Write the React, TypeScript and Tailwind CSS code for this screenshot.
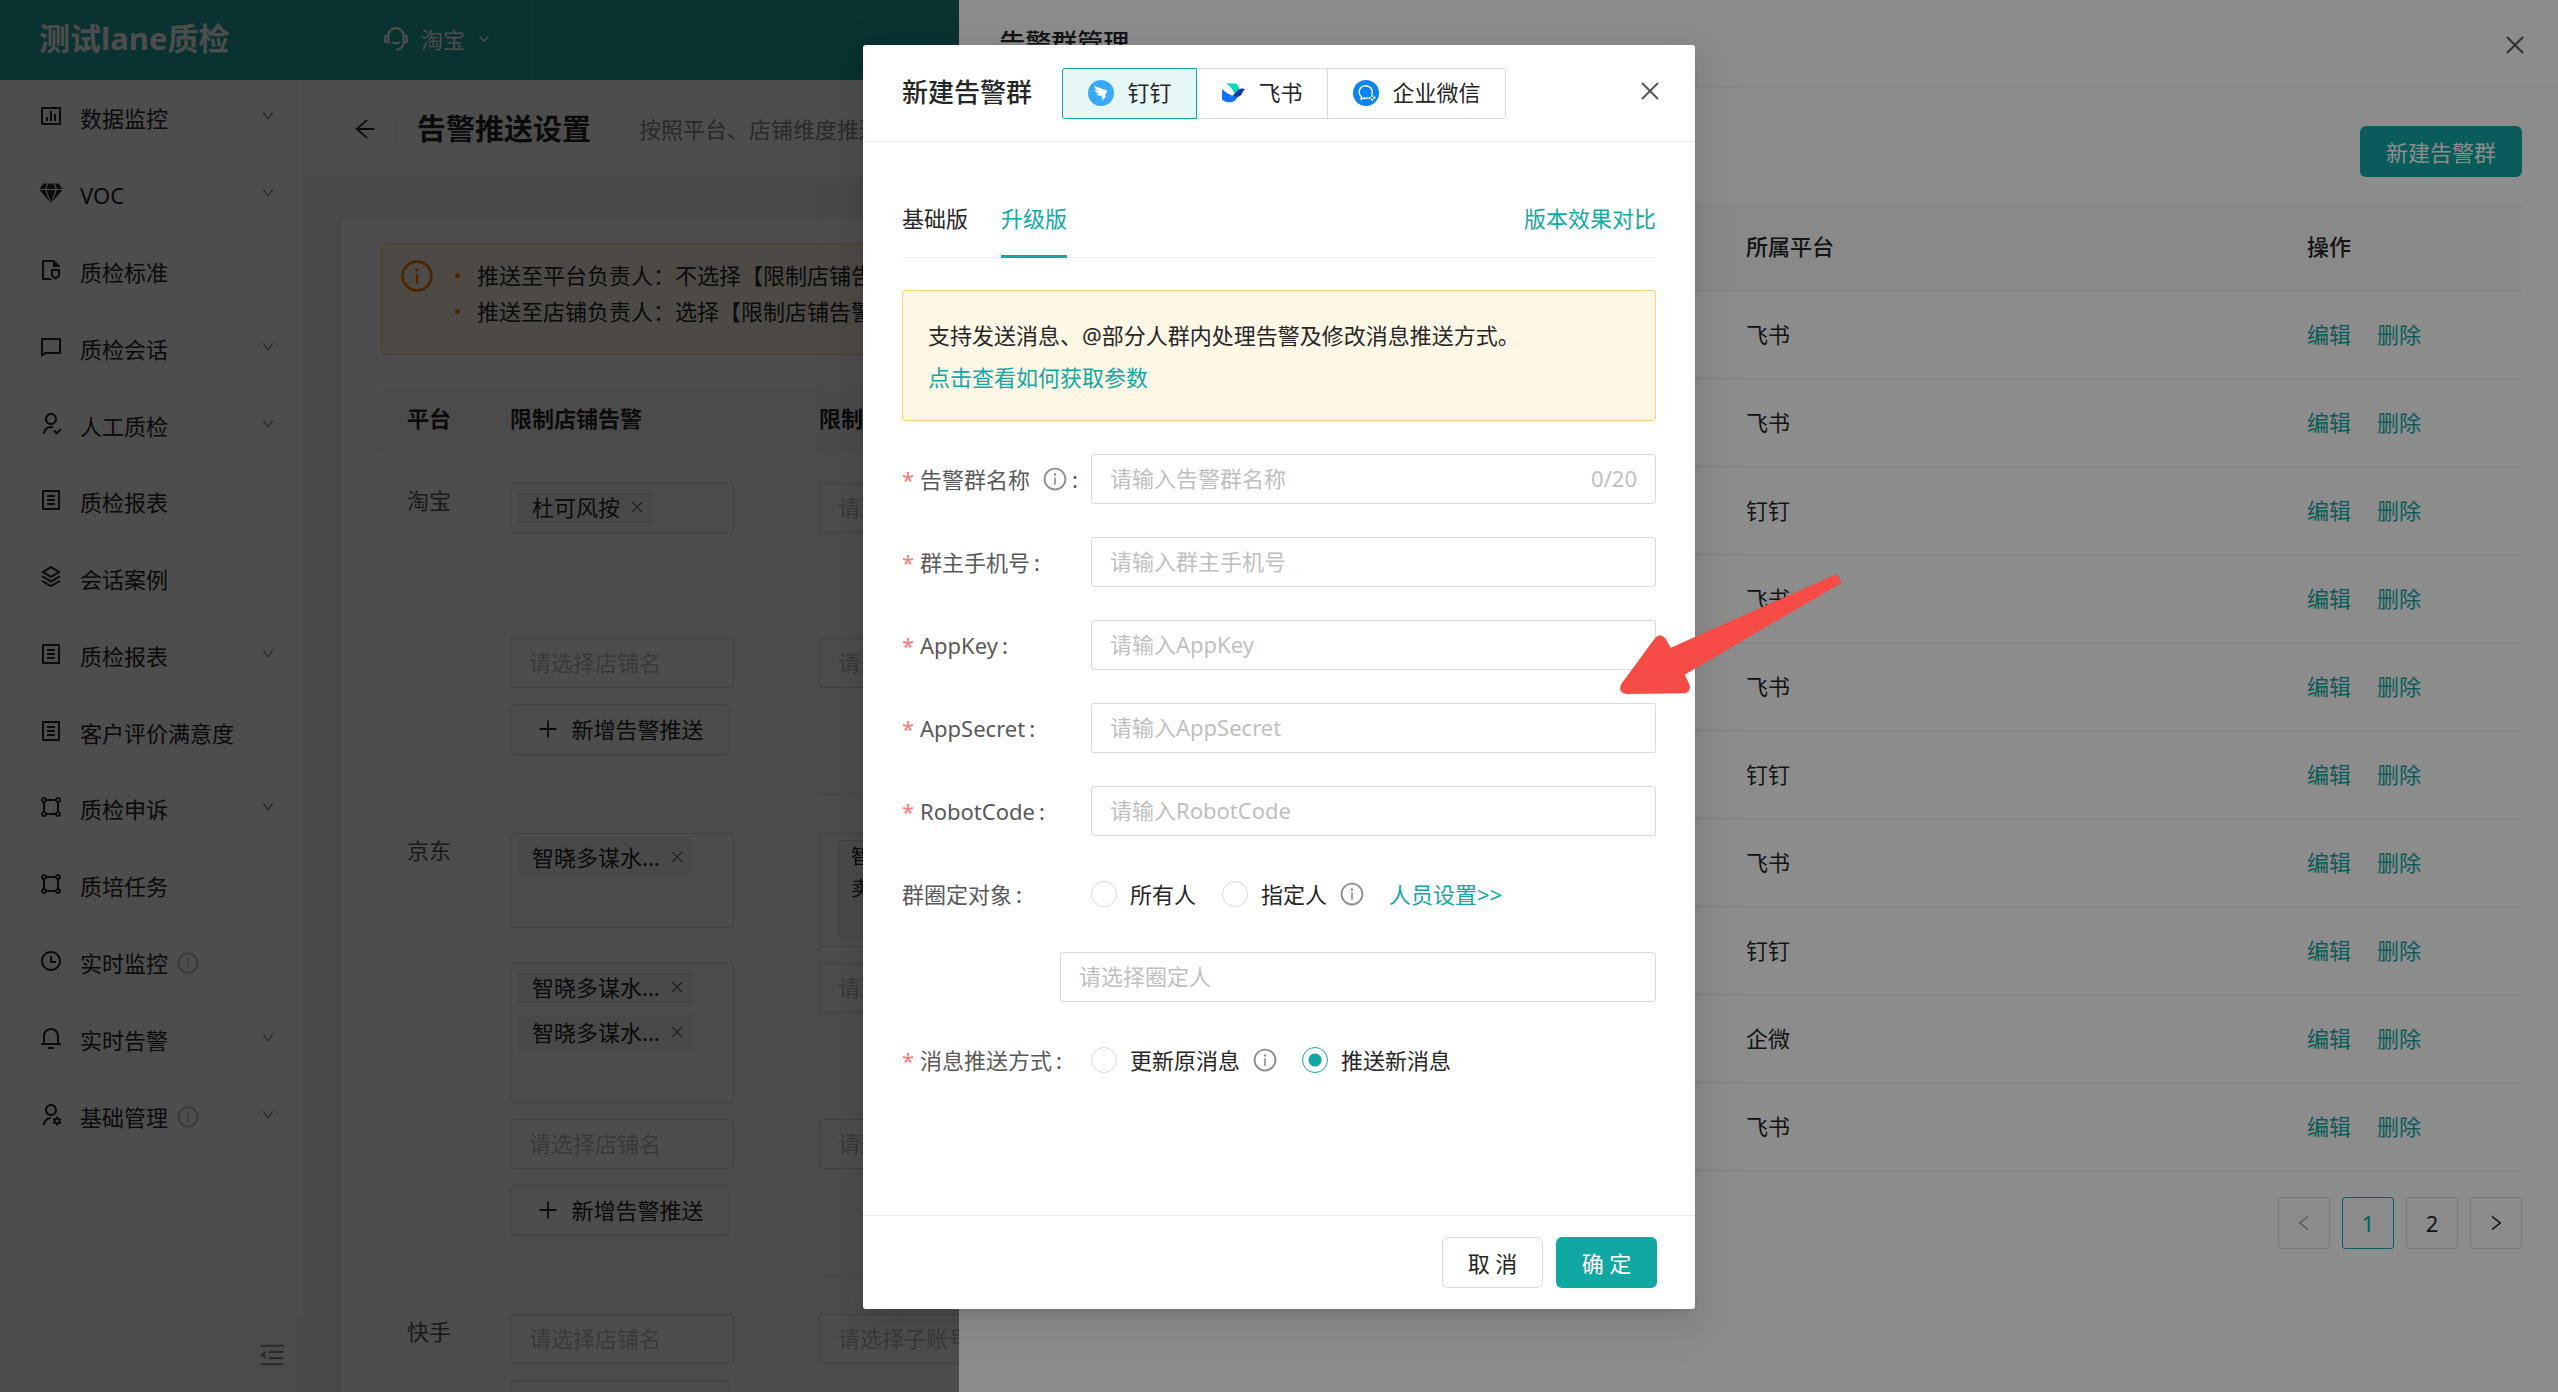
import { useState } from "react";
import type { ReactNode } from "react";
import type { IconType } from "react-icons";
import {
  AiOutlineArrowLeft,
  AiOutlineClose,
  AiOutlineDown,
  AiOutlineInfoCircle,
  AiOutlineLeft,
  AiOutlineMenuFold,
  AiOutlinePlus,
  AiOutlineRight,
} from "react-icons/ai";
import {
  RiArrowDownSLine,
  RiBarChartBoxLine,
  RiCustomerService2Line,
  RiFileListLine,
  RiFileShield2Line,
  RiNotification3Line,
  RiShapeLine,
  RiStackLine,
  RiTimeLine,
  RiUserFollowLine,
  RiUserSettingsLine,
} from "react-icons/ri";

type MenuItem = {
  label: string;
  icon: IconType | typeof GemIcon;
  arrow?: boolean;
  info?: boolean;
};

type IconProps = { size?: number | string; className?: string };

function GemIcon({ size = 24, className }: IconProps) {
  return (
    <svg width={size} height={size} viewBox="0 0 24 24" fill="currentColor" className={className}>
      <path d="M4.5 2.5h3.7L6 8H0.3z" />
      <path d="M9.4 2.5h5.2L16.6 8H7.4z" />
      <path d="M15.8 2.5h3.7L23.7 8H18z" />
      <path d="M0.6 9h5.6l4.6 12z" />
      <path d="M7.5 9h9L12 22z" />
      <path d="M17.8 9h5.6L13.2 21z" />
    </svg>
  );
}

function ChatIcon({ size = 24, className }: IconProps) {
  return (
    <svg
      width={size}
      height={size}
      viewBox="0 0 24 24"
      fill="none"
      stroke="currentColor"
      strokeWidth="2"
      strokeLinejoin="round"
      className={className}
    >
      <path d="M3 4h18v14H6.100L3 20.400z" />
    </svg>
  );
}

function DingIcon() {
  return (
    <svg width="26" height="26" viewBox="0 0 26 26">
      <circle cx="13" cy="13" r="13" fill="#3aa8ff" />
      <path
        fill="#fff"
        d="M6.2 5.4C9 7.5 15 8.6 18.6 10.3c.6.4.5 1 .2 1.6l-2.2 4.4h1.9l-4.6 4.4.9-3.4h-1.7l.7-1.6c-2.5.4-4.6-.5-5.2-1.8h3c-3-.6-4.6-2-5-3.8l3.8.8C7.8 9.8 6.3 8 6.2 5.4z"
      />
    </svg>
  );
}

function FeishuIcon() {
  return (
    <svg width="23" height="20" viewBox="0 0 23 20">
      <path fill="#00dab8" d="M4.3.5h10c1.5 1.5 2.8 3.8 3 5.8l-4.5 4.2C11 7 8.5 3.5 4.3.5z" />
      <path fill="#1470ff" d="M0 6c3.5 3.5 8 6.3 13 7.5l3 .3c-2 3.7-5 5.5-8.5 5.5-3.2 0-6-1.2-7.5-2.8z" />
      <path fill="#0b3ca8" d="M23 6.3c-1.8 1.2-2.2 3.2-3.5 5.2-2 3-5.5 3-9 1.2 3-2.5 4.5-6 8-7 1.5-.4 3.3-.2 4.5.6z" />
    </svg>
  );
}

function WecomIcon() {
  return (
    <svg width="26" height="26" viewBox="0 0 26 26">
      <circle cx="13" cy="13" r="13" fill="#0a84f0" />
      <path
        fill="none"
        stroke="#fff"
        strokeWidth="1.4"
        strokeLinejoin="round"
        d="M18.8 14.5a6.6 6.3 0 1 0-10.3 2.4l-.6 2.4 2.900-1.300a7 7 0 0 0 4.500-.1"
      />
      <path
        stroke="#fff"
        strokeWidth="1.6"
        strokeLinecap="round"
        d="M18.7 15.3l.8 1M21.8 17.4l-1 .9M19.4 20.3l-.8-1M16.3 18.2l1-.8"
      />
    </svg>
  );
}

const menu: MenuItem[] = [
  { label: "数据监控", icon: RiBarChartBoxLine, arrow: true },
  { label: "VOC", icon: GemIcon, arrow: true },
  { label: "质检标准", icon: RiFileShield2Line },
  { label: "质检会话", icon: ChatIcon, arrow: true },
  { label: "人工质检", icon: RiUserFollowLine, arrow: true },
  { label: "质检报表", icon: RiFileListLine },
  { label: "会话案例", icon: RiStackLine },
  { label: "质检报表", icon: RiFileListLine, arrow: true },
  { label: "客户评价满意度", icon: RiFileListLine },
  { label: "质检申诉", icon: RiShapeLine, arrow: true },
  { label: "质培任务", icon: RiShapeLine },
  { label: "实时监控", icon: RiTimeLine, info: true },
  { label: "实时告警", icon: RiNotification3Line, arrow: true },
  { label: "基础管理", icon: RiUserSettingsLine, arrow: true, info: true },
];

type Slot = {
  slot: string;
  shopBox: string;
  shops: string[];
  accounts?: string[];
};

const rules: { platform: string; pad: string; slots: Slot[] }[] = [
  {
    platform: "淘宝",
    pad: "pt-8",
    slots: [
      { slot: "h-[139px]", shopBox: "h-[50px]", shops: ["杜可风按"] },
      { slot: "h-[50px]", shopBox: "h-[50px]", shops: [] },
    ],
  },
  {
    platform: "京东",
    pad: "pt-[38px]",
    slots: [
      { slot: "h-[114px]", shopBox: "h-[95px]", shops: ["智晓多谋水..."], accounts: ["智晓多谋", "卖家账号"] },
      { slot: "h-[140px]", shopBox: "h-[140px]", shops: ["智晓多谋水...", "智晓多谋水..."] },
      { slot: "h-[50px]", shopBox: "h-[50px]", shops: [] },
    ],
  },
  {
    platform: "快手",
    pad: "pt-[38px]",
    slots: [{ slot: "h-[50px]", shopBox: "h-[50px]", shops: [] }],
  },
];

const groups = ["飞书", "飞书", "钉钉", "飞书", "飞书", "钉钉", "飞书", "钉钉", "企微", "飞书"];

function PlaceholderSelect({ text, label }: { text: string; label: string }) {
  return (
    <select
      aria-label={label}
      className="block h-[50px] w-full appearance-none rounded-[3px] border border-[#d9d9d9] bg-white px-[18px] pb-0.5 text-[#bfbfbf]"
    >
      <option>{text}</option>
    </select>
  );
}

function Sidebar() {
  return (
    <aside className="flex w-[304px] shrink-0 flex-col border-r border-[#ececec] bg-white">
      <nav className="flex h-[1075px] flex-col">
        {menu.map((item, i) => (
          <a key={i} href="#" className="flex flex-1 items-center pr-[28px] pl-[39px] text-[#262626]">
            <item.icon size={24} className="mb-1" />
            <span className="ml-[17px]">{item.label}</span>
            {item.info && <AiOutlineInfoCircle size={24} className="ml-2 text-[#bfbfbf]" />}
            {item.arrow && <AiOutlineDown size={14} className="mb-1 ml-auto text-[#737373]" />}
          </a>
        ))}
      </nav>
      <div className="mt-auto flex h-[75px] items-center justify-end border-t border-[#ececec] bg-[#fafafa] pr-4">
        <button aria-label="收起菜单" className="text-[#8c8c8c]">
          <AiOutlineMenuFold size={30} />
        </button>
      </div>
    </aside>
  );
}

function RulesTable() {
  return (
    <table className="mt-8 w-full table-fixed border-collapse text-left">
      <thead>
        <tr className="h-[63px] border-b border-[#ececec] bg-[#fafafa] text-[#262626]">
          <th className="w-[103px] pl-[26px] font-bold">平台</th>
          <th className="w-[309px] pl-[26px] font-bold">限制店铺告警</th>
          <th className="pl-[26px] font-bold">限制子账号告警</th>
        </tr>
      </thead>
      <tbody>
        {rules.map((rule) => (
          <tr key={rule.platform} className="border-b border-[#ececec] align-top">
            <td className={`pl-[26px] leading-[34px] text-[#595959] ${rule.pad}`}>{rule.platform}</td>
            <td className={`pr-[59px] pb-[39px] pl-[26px] ${rule.pad}`}>
              <div className="flex flex-col items-start gap-4">
                {rule.slots.map((s, i) => (
                  <div key={i} className={`w-full ${s.slot}`}>
                    {s.shops.length === 0 ? (
                      <PlaceholderSelect text="请选择店铺名" label="店铺" />
                    ) : (
                      <div
                        className={`flex flex-col items-start gap-[7px] rounded-[3px] border border-[#d9d9d9] px-[7px] py-[5px] ${s.shopBox}`}
                      >
                        {s.shops.map((shop, j) => (
                          <span
                            key={j}
                            className="flex h-[38px] items-center gap-[9px] rounded-[3px] border border-[#f0f0f0] bg-[#f5f5f5] pr-[7px] pb-0.5 pl-[13px] text-[#262626]"
                          >
                            {shop}
                            <button aria-label="移除" className="text-[#737373]">
                              <AiOutlineClose size={16} />
                            </button>
                          </span>
                        ))}
                      </div>
                    )}
                  </div>
                ))}
                <button className="flex h-[51px] w-[220px] items-center justify-center gap-[11px] rounded-md border border-[#d9d9d9] text-[#262626]">
                  <AiOutlinePlus size={24} />
                  新增告警推送
                </button>
              </div>
            </td>
            <td className={`pr-[59px] pl-[26px] ${rule.pad}`}>
              <div className="flex flex-col gap-4">
                {rule.slots.map((s, i) => (
                  <div key={i} className={`w-[224px] ${s.slot}`}>
                    {s.accounts ? (
                      <div className="h-full rounded-[3px] border border-[#d9d9d9] px-[18px] py-[6px]">
                        <div className="h-[98px] rounded-[3px] border border-[#d9d9d9] bg-[#fafafa] px-3 text-[20px] leading-8 text-[#262626]">
                          {s.accounts.map((line) => (
                            <p key={line}>{line}</p>
                          ))}
                        </div>
                      </div>
                    ) : (
                      <PlaceholderSelect text="请选择子账号" label="子账号" />
                    )}
                  </div>
                ))}
              </div>
            </td>
          </tr>
        ))}
      </tbody>
    </table>
  );
}

function Page() {
  return (
    <div className="flex h-full flex-col">
      <header className="flex h-20 shrink-0 items-stretch bg-[#20a8a2] text-white">
        <div className="flex w-[351px] items-center border-r border-black/5 pl-[39px] text-[31px] font-bold">
          <span className="pb-1">测试lane质检</span>
        </div>
        <button className="flex w-[178px] items-center border-r border-black/5 pb-0.5 pl-8">
          <RiCustomerService2Line size={26} />
          <span className="ml-[12px]">淘宝</span>
          <RiArrowDownSLine size={18} className="ml-[10px]" />
        </button>
      </header>
      <div className="flex min-h-0 flex-1">
        <Sidebar />
        <main className="min-w-0 flex-1 overflow-hidden bg-[#f5f5f5]">
          <div className="flex h-[99px] items-center border-b border-[#ececec] bg-white pl-[48px]">
            <button aria-label="返回" className="text-[#262626]">
              <AiOutlineArrowLeft size={26} />
            </button>
            <span className="ml-[18px] h-5 w-px bg-[#ececec]" />
            <h1 className="ml-5 text-[29px] font-bold text-[#262626]">告警推送设置</h1>
            <p className="ml-12 text-[#8c8c8c]">按照平台、店铺维度推送</p>
          </div>
          <section className="mt-10 ml-[38px] bg-white pt-6 pl-[39px]">
            <div className="flex h-[112px] rounded-md border border-[#ffcf75] bg-[#fff7e6] pt-[13px] pl-[17px]">
              <AiOutlineInfoCircle size={36} className="mt-px shrink-0 text-[#fa7d0c]" />
              <ul className="ml-4 leading-9 whitespace-nowrap text-[#262626]">
                <li className="flex items-center gap-[17px]">
                  <span className="ml-1 size-[5px] rounded-full bg-[#fa7d0c]" />
                  推送至平台负责人：不选择【限制店铺告警】
                </li>
                <li className="flex items-center gap-[17px]">
                  <span className="ml-1 size-[5px] rounded-full bg-[#fa7d0c]" />
                  推送至店铺负责人：选择【限制店铺告警】
                </li>
              </ul>
            </div>
            <RulesTable />
          </section>
        </main>
      </div>
    </div>
  );
}

function GroupDrawer() {
  return (
    <aside className="absolute inset-y-0 right-0 w-5/8 bg-white">
      <div className="flex h-[87px] items-center justify-between border-b border-[#ececec] pr-[30px] pl-10">
        <h2 className="text-[26px] font-medium text-[#262626]">告警群管理</h2>
        <button aria-label="关闭" className="mt-1 text-[#595959]">
          <AiOutlineClose size={26} />
        </button>
      </div>
      <div className="flex flex-col items-end px-9 pt-[39px]">
        <button className="h-[51px] w-[162px] rounded-md bg-[#11a8a4] text-white">新建告警群</button>
        <table className="mt-[26px] w-full table-fixed border-collapse text-left text-[#262626]">
          <thead>
            <tr className="h-[87px] border-b border-[#ececec] bg-[#fafafa]">
              <th />
              <th className="w-[561px] pl-[26px] font-medium">所属平台</th>
              <th className="w-[241px] pl-[26px] font-medium">操作</th>
            </tr>
          </thead>
          <tbody>
            {groups.map((platform, i) => (
              <tr key={i} className="h-[88px] border-b border-[#ececec]">
                <td />
                <td className="pl-[26px]">{platform}</td>
                <td className="pl-[26px] text-[#11a8a4]">
                  <a href="#">编辑</a>
                  <a href="#" className="ml-[26px]">
                    删除
                  </a>
                </td>
              </tr>
            ))}
          </tbody>
        </table>
        <nav className="mt-[26px] flex gap-3 text-[#262626]">
          <button
            aria-label="上一页"
            className="flex size-[52px] items-center justify-center rounded-[3px] border border-[#d9d9d9] text-[#a6a6a6]"
          >
            <AiOutlineLeft size={20} />
          </button>
          <button className="size-[52px] rounded-[3px] border border-[#11a8a4] text-[#11a8a4]">1</button>
          <button className="size-[52px] rounded-[3px] border border-[#d9d9d9]">2</button>
          <button
            aria-label="下一页"
            className="flex size-[52px] items-center justify-center rounded-[3px] border border-[#d9d9d9]"
          >
            <AiOutlineRight size={20} />
          </button>
        </nav>
      </div>
    </aside>
  );
}

function FormRow({
  id,
  label,
  required = true,
  info,
  children,
}: {
  id: string;
  label: string;
  required?: boolean;
  info?: boolean;
  children: ReactNode;
}) {
  return (
    <div className="flex h-[50px] items-center">
      <label htmlFor={id} className="flex w-[189px] shrink-0 items-center text-[#595959]">
        {required && <span className="w-[18px] text-[#ff7875]">*</span>}
        {label}
        {info && <AiOutlineInfoCircle size={26} className="ml-3 text-[#8c8c8c]" />}
        <span className="ml-1">:</span>
      </label>
      {children}
    </div>
  );
}

function TextField({ id, placeholder, count }: { id: string; placeholder: string; count?: string }) {
  return (
    <div className="flex h-full min-w-0 flex-1 items-center rounded-[3px] border border-[#d9d9d9] px-[18px] pb-0.5 text-[#bfbfbf]">
      <input id={id} placeholder={placeholder} className="min-w-0 flex-1 outline-none placeholder:text-[#bfbfbf]" />
      {count && <span>{count}</span>}
    </div>
  );
}

function Radio({
  id,
  name,
  label,
  checked,
  onChange,
}: {
  id?: string;
  name: string;
  label: string;
  checked: boolean;
  onChange: () => void;
}) {
  return (
    <label className="flex items-center gap-[13px] text-[#262626]">
      <input
        id={id}
        type="radio"
        name={name}
        checked={checked}
        onChange={onChange}
        className="size-[26px] appearance-none rounded-full border border-[#d9d9d9] checked:border-[#11a8a4] checked:bg-[radial-gradient(circle,#11a8a4_6px,transparent_7px)]"
      />
      {label}
    </label>
  );
}

const channels = [
  { name: "钉钉", icon: DingIcon, size: "w-[135px]" },
  { name: "飞书", icon: FeishuIcon, size: "w-[132px]" },
  { name: "企业微信", icon: WecomIcon, size: "w-[179px]" },
];

function CreateGroupModal() {
  const [channel, setChannel] = useState("钉钉");
  const [target, setTarget] = useState("");
  const [pushMode, setPushMode] = useState("new");

  return (
    <div
      role="dialog"
      aria-label="新建告警群"
      className="relative mt-[45px] w-[832px] self-start rounded-[3px] bg-white shadow-[0_5px_10px_-6px_rgba(0,0,0,0.12),0_10px_26px_0_rgba(0,0,0,0.08),0_14px_45px_13px_rgba(0,0,0,0.05)]"
    >
      <div className="flex h-[97px] items-center border-b border-[#ececec] pr-[32px] pl-[39px]">
        <h2 className="pb-0.5 text-[26px] font-medium text-[#262626]">新建告警群</h2>
        <div className="ml-[30px] flex">
          {channels.map((c) => (
            <button
              key={c.name}
              onClick={() => setChannel(c.name)}
              className={`-mr-px flex h-[51px] items-center justify-center gap-[14px] border text-[#262626] first:rounded-l-[3px] last:rounded-r-[3px] ${c.size} ${
                channel === c.name ? "z-10 border-[#11a8a4] bg-[#e6f7f6]" : "border-[#d9d9d9]"
              }`}
            >
              <c.icon />
              <span className="pb-0.5">{c.name}</span>
            </button>
          ))}
        </div>
        <button aria-label="关闭" className="mb-1 ml-auto text-[#595959]">
          <AiOutlineClose size={26} />
        </button>
      </div>

      <div className="flex flex-col px-[39px] pt-[44px]">
        <div className="flex h-[72px] border-b border-[#ececec]">
          <div className="flex gap-[33px]">
            <button className="flex h-[72px] items-center border-b-[3px] border-transparent pb-[5px] text-[#262626]">
              基础版
            </button>
            <button className="flex h-[72px] items-center border-b-[3px] border-[#11a8a4] pb-[5px] text-[#11a8a4]">
              升级版
            </button>
          </div>
          <a href="#" className="ml-auto flex items-center pb-2 text-[#11a8a4]">
            版本效果对比
          </a>
        </div>

        <div className="mt-8 h-[131px] rounded-[3px] border border-[#ffcf75] bg-[#fff7e6] px-[25px] pt-[23px] leading-[42px]">
          <p className="text-[#262626]">支持发送消息、@部分人群内处理告警及修改消息推送方式。</p>
          <a href="#" className="text-[#11a8a4]">
            点击查看如何获取参数
          </a>
        </div>

        <form className="mt-[33px] flex flex-col gap-[33px]">
          <FormRow id="name" label="告警群名称" info>
            <TextField id="name" placeholder="请输入告警群名称" count="0/20" />
          </FormRow>
          <FormRow id="phone" label="群主手机号">
            <TextField id="phone" placeholder="请输入群主手机号" />
          </FormRow>
          <FormRow id="appkey" label="AppKey">
            <TextField id="appkey" placeholder="请输入AppKey" />
          </FormRow>
          <FormRow id="appsecret" label="AppSecret">
            <TextField id="appsecret" placeholder="请输入AppSecret" />
          </FormRow>
          <FormRow id="robotcode" label="RobotCode">
            <TextField id="robotcode" placeholder="请输入RobotCode" />
          </FormRow>
          <FormRow id="target-all" label="群圈定对象" required={false}>
            <Radio
              id="target-all"
              name="target"
              label="所有人"
              checked={target === "all"}
              onChange={() => setTarget("all")}
            />
            <span className="w-[26px]" />
            <Radio name="target" label="指定人" checked={target === "some"} onChange={() => setTarget("some")} />
            <AiOutlineInfoCircle size={26} className="ml-3 text-[#8c8c8c]" />
            <a href="#" className="ml-6 text-[#11a8a4]">
              人员设置&gt;&gt;
            </a>
          </FormRow>
          <div className="pl-[158px]">
            <PlaceholderSelect text="请选择圈定人" label="圈定人" />
          </div>
          <FormRow id="push-update" label="消息推送方式">
            <Radio
              id="push-update"
              name="push"
              label="更新原消息"
              checked={pushMode === "update"}
              onChange={() => setPushMode("update")}
            />
            <AiOutlineInfoCircle size={26} className="mr-6 ml-3 text-[#8c8c8c]" />
            <Radio name="push" label="推送新消息" checked={pushMode === "new"} onChange={() => setPushMode("new")} />
          </FormRow>
        </form>
      </div>

      <div className="mt-[130px] flex h-[94px] items-center justify-end gap-[13px] border-t border-[#ececec] px-[38px]">
        <button className="h-[51px] w-[101px] rounded-md border border-[#d9d9d9] text-[#262626]">取 消</button>
        <button className="h-[51px] w-[101px] rounded-md bg-[#11a8a4] text-white">确 定</button>
      </div>

      <svg
        width="222"
        height="120"
        viewBox="60 71 667 361"
        className="pointer-events-none absolute top-[529px] left-[757px] z-20"
      >
        <path
          fill="#f74b46"
          d="M712 71L727 97L254 374L268 402Q275 424 256 430L80 432Q56 430 61 408L64 401L164 265Q180 246 196 264L212 293Z"
        />
      </svg>
    </div>
  );
}

export default function App() {
  return (
    <div className="relative h-screen overflow-hidden bg-white font-['Noto_Sans','Noto_Sans_CJK_SC',sans-serif] text-[22px] leading-[34px]">
      <Page />
      <div className="absolute inset-0 bg-black/45" />
      <GroupDrawer />
      <div className="absolute inset-0 flex justify-center bg-black/45">
        <CreateGroupModal />
      </div>
    </div>
  );
}
